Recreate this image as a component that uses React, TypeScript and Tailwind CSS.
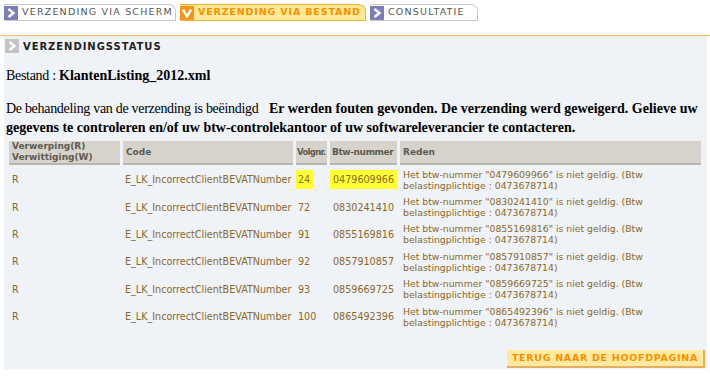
import React from "react";

const rows = [
  { vol: "24", btw: "0479609966", mark: true },
  { vol: "72", btw: "0830241410" },
  { vol: "91", btw: "0855169816" },
  { vol: "92", btw: "0857910857" },
  { vol: "93", btw: "0859669725" },
  { vol: "100", btw: "0865492396" },
];

const Chevron = ({ bg }: { bg: string }) => (
  <span className={`flex w-[14px] h-[14px] items-center justify-center ${bg}`}>
    <svg width="10" height="10" viewBox="0 0 10 10">
      <polyline points="2.5,1 7.5,5 2.5,9" fill="none" stroke="white" strokeWidth="2.4" />
    </svg>
  </span>
);

const Check = () => (
  <span className="flex w-[14px] h-[14px] items-center justify-center bg-[#f7941d]">
    <svg width="10" height="10" viewBox="0 0 10 10">
      <polyline points="1,1.5 5,8.5 9,1.5" fill="none" stroke="white" strokeWidth="2.4" />
    </svg>
  </span>
);

export default function App() {
  return (
    <div className="w-[710px] h-[383px] bg-white font-['DejaVu_Sans',Verdana,sans-serif] overflow-hidden">
      {/* tabs */}
      <div className="flex gap-[4px] pl-[4px] pt-[4px] h-[36px] border-b border-[#f5b870]">
        <div className="flex items-center gap-[4px] h-[17px] w-[172px] bg-white border border-[#c8c8cc] border-l-0 rounded-tr-[7px]">
          <Chevron bg="bg-[#7b7fb5]" />
          <span className="text-[9.5px] tracking-[1.2px] text-[#555]">VERZENDING VIA SCHERM</span>
        </div>
        <div className="flex items-center gap-[4px] h-[17px] w-[186px] bg-[#ffe896] border border-[#f0b040] border-l-0 rounded-tr-[7px]">
          <Check />
          <span className="text-[9.5px] font-bold tracking-[0.85px] text-[#f39200]">VERZENDING VIA BESTAND</span>
        </div>
        <div className="flex items-center gap-[4px] h-[17px] w-[108px] bg-white border border-[#c8c8cc] border-l-0 rounded-tr-[7px]">
          <Chevron bg="bg-[#7b7fb5]" />
          <span className="text-[9.5px] tracking-[1.2px] text-[#555]">CONSULTATIE</span>
        </div>
      </div>

      {/* content */}
      <div className="ml-[4px] mr-[3px] h-[333px] bg-[#eff2f7] flex flex-col">
        <div className="flex items-center gap-[4px] pl-[1px] pt-[3px] h-[17px]">
          <Chevron bg="bg-[#c4c4c4]" />
          <span className="text-[10px] font-bold tracking-[0.95px] text-[#222]">VERZENDINGSSTATUS</span>
        </div>

        <div className="font-['Liberation_Serif',serif] text-[14px] text-black pl-[2px]">
          <div className="mt-[12px]">
            <span className="tracking-[-0.3px]">Bestand : </span>
            <b>KlantenListing_2012.xml</b>
          </div>
          <div className="mt-[13px] leading-[19px] whitespace-nowrap">
            <span className="tracking-[-0.3px]">De behandeling van de verzending is beëindigd</span>
            &nbsp;&nbsp;&nbsp;
            <b>
              Er werden fouten gevonden. De verzending werd geweigerd. Gelieve uw
              <br />
              gegevens te controleren en/of uw btw-controlekantoor of uw softwareleverancier te contacteren.
            </b>
          </div>
        </div>

        <table className="mt-[2px] ml-[2px] w-[698px] table-fixed border-separate border-spacing-x-[3px] border-spacing-y-[2px] text-[9.6px] leading-[11px] text-[#8a6a2a]">
          <colgroup>
            <col className="w-[111px]" />
            <col className="w-[170px]" />
            <col className="w-[31px]" />
            <col className="w-[67px]" />
            <col />
          </colgroup>
          <thead>
            <tr className="text-left text-[9px] text-[#5e5a50]">
              <th className="h-[22px] bg-[#d6d3cc] border-b-2 border-[#b9b5ac] px-[3px] font-bold align-middle whitespace-nowrap">
                Verwerping(R)
                <br />
                Verwittiging(W)
              </th>
              <th className="bg-[#d6d3cc] border-b-2 border-[#b9b5ac] px-[3px] font-bold">Code</th>
              <th className="bg-[#d6d3cc] border-b-2 border-[#b9b5ac] px-[1px] font-bold whitespace-nowrap text-[8.5px] tracking-[-0.7px]">
                Volgnr.
              </th>
              <th className="bg-[#d6d3cc] border-b-2 border-[#b9b5ac] px-[2px] font-bold whitespace-nowrap tracking-[-0.4px]">
                Btw-nummer
              </th>
              <th className="bg-[#d6d3cc] border-b-2 border-[#b9b5ac] px-[3px] font-bold">Reden</th>
            </tr>
          </thead>
          <tbody>
            {rows.map((r) => (
              <tr key={r.btw} className="h-[25.4px]">
                <td className="px-[3px]">R</td>
                <td className="px-[2px] whitespace-nowrap">E_LK_IncorrectClientBEVATNumber</td>
                <td className="px-0">
                  <span className={r.mark ? "bg-[#ffff33] py-[4px] pl-[2px] pr-[4px]" : "pl-[2px]"}>{r.vol}</span>
                </td>
                <td className="px-0 whitespace-nowrap">
                  <span className={r.mark ? "bg-[#ffff33] py-[4px] px-[3px]" : "px-[3px]"}>{r.btw}</span>
                </td>
                <td className="px-[3px] whitespace-nowrap text-[9.3px]">
                  Het btw-nummer "{r.btw}" is niet geldig. (Btw
                  <br />
                  belastingplichtige : 0473678714)
                </td>
              </tr>
            ))}
          </tbody>
        </table>

        <div className="flex justify-end mt-auto mb-[1px] mr-[2px]">
          <button className="h-[18px] px-[5px] bg-[#ffe9a0] border-r-2 border-b-2 border-[#e0b060] text-[9.5px] font-bold tracking-[0.7px] text-[#f39200]">
            TERUG NAAR DE HOOFDPAGINA
          </button>
        </div>
      </div>
    </div>
  );
}
